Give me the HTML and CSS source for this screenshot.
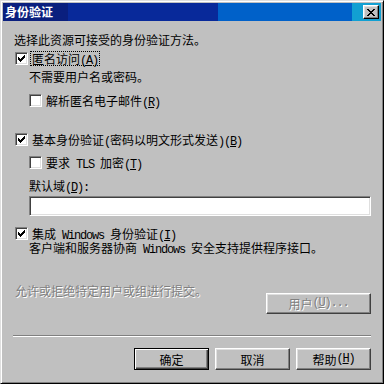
FILE: index.html
```html
<!DOCTYPE html>
<html lang="zh-CN">
<head>
<meta charset="utf-8">
<title>身份验证</title>
<link rel="stylesheet" href="styles.css">
</head>
<body>
<div class="window">
  <div class="titlebar">
    <span class="title">身份验证</span>
    <span class="close"><svg width="8" height="7" viewBox="0 0 8 7" shape-rendering="crispEdges"><path d="M0 0h2v1H0zM6 0h2v1H6zM1 1h2v1H1zM5 1h2v1H5zM2 2h4v1H2zM3 3h2v1H3zM2 4h4v1H2zM1 5h2v1H1zM5 5h2v1H5zM0 6h2v1H0zM6 6h2v1H6z" fill="#000"/></svg></span>
  </div>
  <div class="content">
    <div class="line intro">选择此资源可接受的身份验证方法。</div>

    <div class="check top anon">
      <span class="cb"><svg class="tick" width="7" height="7" viewBox="0 0 7 7" shape-rendering="crispEdges"><path d="M0 2h1v3H0zM1 3h1v3H1zM2 4h1v3H2zM3 3h1v3H3zM4 2h1v3H4zM5 1h1v3H5zM6 0h1v3H6z"/></svg></span>
      <span class="label focus">匿名访问<span class="en">(<u>A</u>)</span></span>
    </div>
    <div class="line sub note1">不需要用户名或密码。</div>
    <div class="check sub resolve">
      <span class="cb"></span>
      <span class="label">解析匿名电子邮件<span class="en">(<u>R</u>)</span></span>
    </div>

    <div class="check top basic">
      <span class="cb"><svg class="tick" width="7" height="7" viewBox="0 0 7 7" shape-rendering="crispEdges"><path d="M0 2h1v3H0zM1 3h1v3H1zM2 4h1v3H2zM3 3h1v3H3zM4 2h1v3H4zM5 1h1v3H5zM6 0h1v3H6z"/></svg></span>
      <span class="label">基本身份验证<span class="en">(</span>密码以明文形式发送<span class="en">)(<u>B</u>)</span></span>
    </div>
    <div class="check sub tls">
      <span class="cb"></span>
      <span class="label">要求<span class="en"> TLS </span>加密<span class="en">(<u>T</u>)</span></span>
    </div>
    <div class="line sub domain">默认域<span class="en">(<u>D</u>):</span></div>
    <div class="field"></div>

    <div class="check top integ">
      <span class="cb"><svg class="tick" width="7" height="7" viewBox="0 0 7 7" shape-rendering="crispEdges"><path d="M0 2h1v3H0zM1 3h1v3H1zM2 4h1v3H2zM3 3h1v3H3zM4 2h1v3H4zM5 1h1v3H5zM6 0h1v3H6z"/></svg></span>
      <span class="label">集成<span class="en"> Windows </span>身份验证<span class="en">(<u>I</u>)</span></span>
    </div>
    <div class="line sub note2">客户端和服务器协商<span class="en"> Windows </span>安全支持提供程序接口。</div>

    <div class="users">
      <span class="disabled">允许或拒绝特定用户或组进行提交。</span>
      <span class="btn users-btn disabled">用户<span class="en">(<u>U</u>)...</span></span>
    </div>

    <div class="sep"></div>

    <div class="btns">
      <span class="btn default">确定</span>
      <span class="btn">取消</span>
      <span class="btn">帮助<span class="en">(<u>H</u>)</span></span>
    </div>
  </div>
</div>
</body>
</html>
```

FILE: styles.css
```css
html, body {
  margin: 0;
  padding: 0;
  background: #c0c0c0;
}

body {
  font-family: "Noto Sans CJK SC", "Liberation Sans", sans-serif;
  font-size: 12px;
  line-height: 13px;
  color: #000;
}

.window {
  width: 384px;
  height: 384px;
  box-sizing: border-box;
  border: 1px solid;
  border-color: #dfdfdf #000 #000 #dfdfdf;
  box-shadow: inset 1px 1px #fff, inset -1px -1px #808080;
  padding: 2px;
  background: #c0c0c0;
}

.titlebar {
  height: 18px;
  display: flex;
  align-items: center;
  padding-left: 2px;
  background: linear-gradient(to right,
    #0a1f7e 0px, #0a1f7e 65px,
    #08299a 65px, #08299a 215px,
    #0061c9 215px, #0061c9 349px,
    #12a0d2 349px, #12a0d2 100%);
  color: #fff;
}

.title {
  font-weight: bold;
  line-height: 14px;
}

.close {
  margin-left: auto;
  margin-right: 2px;
  width: 16px;
  height: 14px;
  box-sizing: border-box;
  background: #c0c0c0;
  border: 1px solid;
  border-color: #fff #000 #000 #fff;
  box-shadow: inset -1px -1px #808080, inset 1px 1px #dfdfdf;
  display: flex;
  align-items: center;
  justify-content: center;
}

.close svg {
  display: block;
  margin-left: -1px;
}

.content {
  padding: 0 10px 0 11px;
}

.en {
  font-family: "Liberation Mono", monospace;
  font-size: 12px;
  letter-spacing: -1.2px;
}

.line {
  height: 13px;
  white-space: nowrap;
}

.sub {
  margin-left: 15px;
}

.top {
  margin-left: 1px;
}

.check {
  height: 13px;
  display: flex;
  align-items: center;
  gap: 4px;
  white-space: nowrap;
}

.cb {
  width: 13px;
  height: 13px;
  box-sizing: border-box;
  background: #fff;
  border: 1px solid;
  border-color: #808080 #fff #fff #808080;
  box-shadow: inset 1px 1px #404040, inset -1px -1px #dfdfdf;
  display: flex;
  align-items: center;
  justify-content: center;
  flex: none;
}

.tick {
  display: block;
  fill: #000;
}

.label {
  height: 13px;
  line-height: 13px;
}

.focus {
  outline: 1px dotted #000;
  outline-offset: 0;
  margin-left: -1px;
  padding: 0 1px;
}

.intro { margin-top: 12px; }
.anon { margin-top: 6px; }
.note1 { margin-top: 5px; }
.resolve { margin-top: 11px; }
.basic { margin-top: 26px; }
.tls { margin-top: 10px; }
.domain { margin-top: 10px; }

.field {
  margin-top: 4px;
  margin-left: 15px;
  height: 20px;
  box-sizing: border-box;
  background: #fff;
  border: 1px solid;
  border-color: #808080 #fff #fff #808080;
  box-shadow: inset 1px 1px #404040, inset -1px -1px #dfdfdf;
}

.integ { margin-top: 11px; }
.note2 { margin-top: 1px; }

.users {
  margin-top: 30px;
  margin-left: 1px;
  height: 30px;
  display: flex;
  justify-content: space-between;
  align-items: flex-start;
}

.disabled {
  color: #808080;
  text-shadow: 1px 1px 0 #fff;
}

.btn {
  width: 75px;
  height: 22px;
  box-sizing: border-box;
  border: 1px solid;
  border-color: #fff #404040 #404040 #fff;
  box-shadow: inset -1px -1px #808080, inset 1px 1px #dfdfdf;
  display: flex;
  align-items: center;
  justify-content: center;
  white-space: nowrap;
  background: #c0c0c0;
}

.users-btn {
  width: 105px;
  height: 21px;
  align-self: flex-end;
}

.btn.default {
  border-color: #000;
  box-shadow: inset 1px 1px #fff, inset -1px -1px #404040, inset -2px -2px #808080;
}

.sep {
  margin-top: 21px;
  margin-left: -1px;
  border-top: 1px solid #808080;
  border-bottom: 1px solid #fff;
}

.btns {
  margin-top: 11px;
  display: flex;
  justify-content: flex-end;
  gap: 6px;
}
```
